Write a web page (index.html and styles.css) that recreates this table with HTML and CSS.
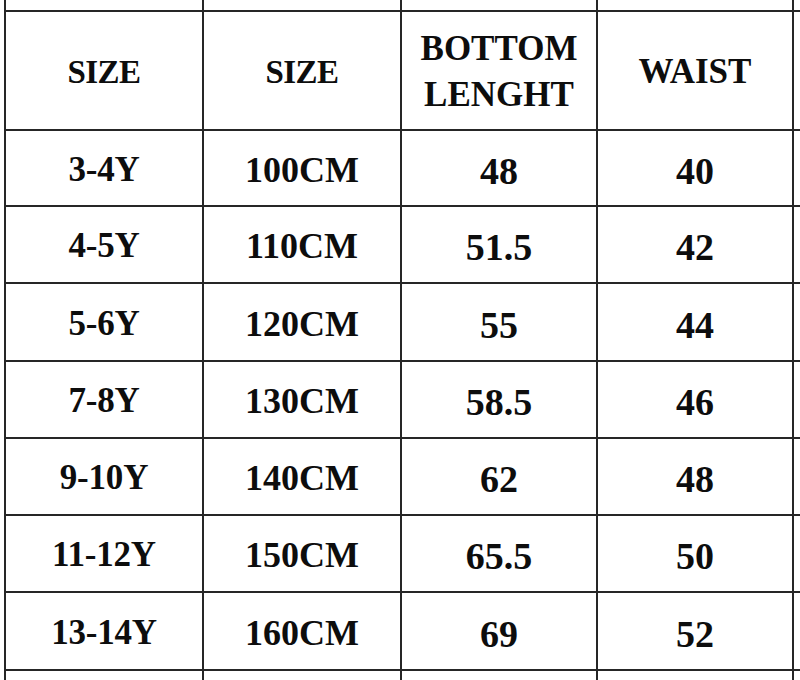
FILE: index.html
```html
<!DOCTYPE html>
<html>
<head>
<meta charset="utf-8">
<link rel="stylesheet" href="styles.css">
</head>
<body>
<div class="chart">
  <div class="cell"></div><div class="cell"></div><div class="cell"></div><div class="cell"></div><div class="cell"></div>

  <div class="cell head">SIZE</div>
  <div class="cell head">SIZE</div>
  <div class="cell head wide">BOTTOM<br>LENGHT</div>
  <div class="cell head wide">WAIST</div>
  <div class="cell"></div>

  <div class="cell age">3-4Y</div><div class="cell cm">100CM</div><div class="cell num">48</div><div class="cell num">40</div><div class="cell"></div>
  <div class="cell age">4-5Y</div><div class="cell cm">110CM</div><div class="cell num">51.5</div><div class="cell num">42</div><div class="cell"></div>
  <div class="cell age">5-6Y</div><div class="cell cm">120CM</div><div class="cell num">55</div><div class="cell num">44</div><div class="cell"></div>
  <div class="cell age">7-8Y</div><div class="cell cm">130CM</div><div class="cell num">58.5</div><div class="cell num">46</div><div class="cell"></div>
  <div class="cell age">9-10Y</div><div class="cell cm">140CM</div><div class="cell num">62</div><div class="cell num">48</div><div class="cell"></div>
  <div class="cell age">11-12Y</div><div class="cell cm">150CM</div><div class="cell num">65.5</div><div class="cell num">50</div><div class="cell"></div>
  <div class="cell age">13-14Y</div><div class="cell cm">160CM</div><div class="cell num">69</div><div class="cell num">52</div><div class="cell"></div>

  <div class="cell"></div><div class="cell"></div><div class="cell"></div><div class="cell"></div><div class="cell"></div>
</div>
</body>
</html>
```

FILE: styles.css
```css
html, body {
  margin: 0;
  padding: 0;
  background: #ffffff;
  overflow: hidden;
  width: 800px;
  height: 680px;
}

.chart {
  display: grid;
  grid-template-columns: 196px 196px 194px 194px 20px;
  grid-template-rows: 10px 117px 74px 75px 76px 75px 75px 75px 76px 30px;
  gap: 2px;
  background: #262626;
  margin-left: 4px;
  padding-left: 2px;
  width: max-content;
  font-family: "Liberation Serif", "Times New Roman", serif;
  font-weight: bold;
  color: #0d0d0d;
}

.cell {
  background: #ffffff;
  display: flex;
  align-items: center;
  justify-content: center;
  text-align: center;
}

.head {
  font-size: 33px;
  letter-spacing: -0.5px;
  line-height: 46px;
  padding-top: 2px;
}

.head.wide {
  font-size: 35px;
  letter-spacing: 0;
}

.age {
  font-size: 35px;
  letter-spacing: -0.2px;
  padding-top: 3px;
}

.cm {
  font-size: 36px;
  letter-spacing: 0;
  padding-top: 3px;
}

.num {
  font-size: 38px;
  padding-top: 5px;
}
```
